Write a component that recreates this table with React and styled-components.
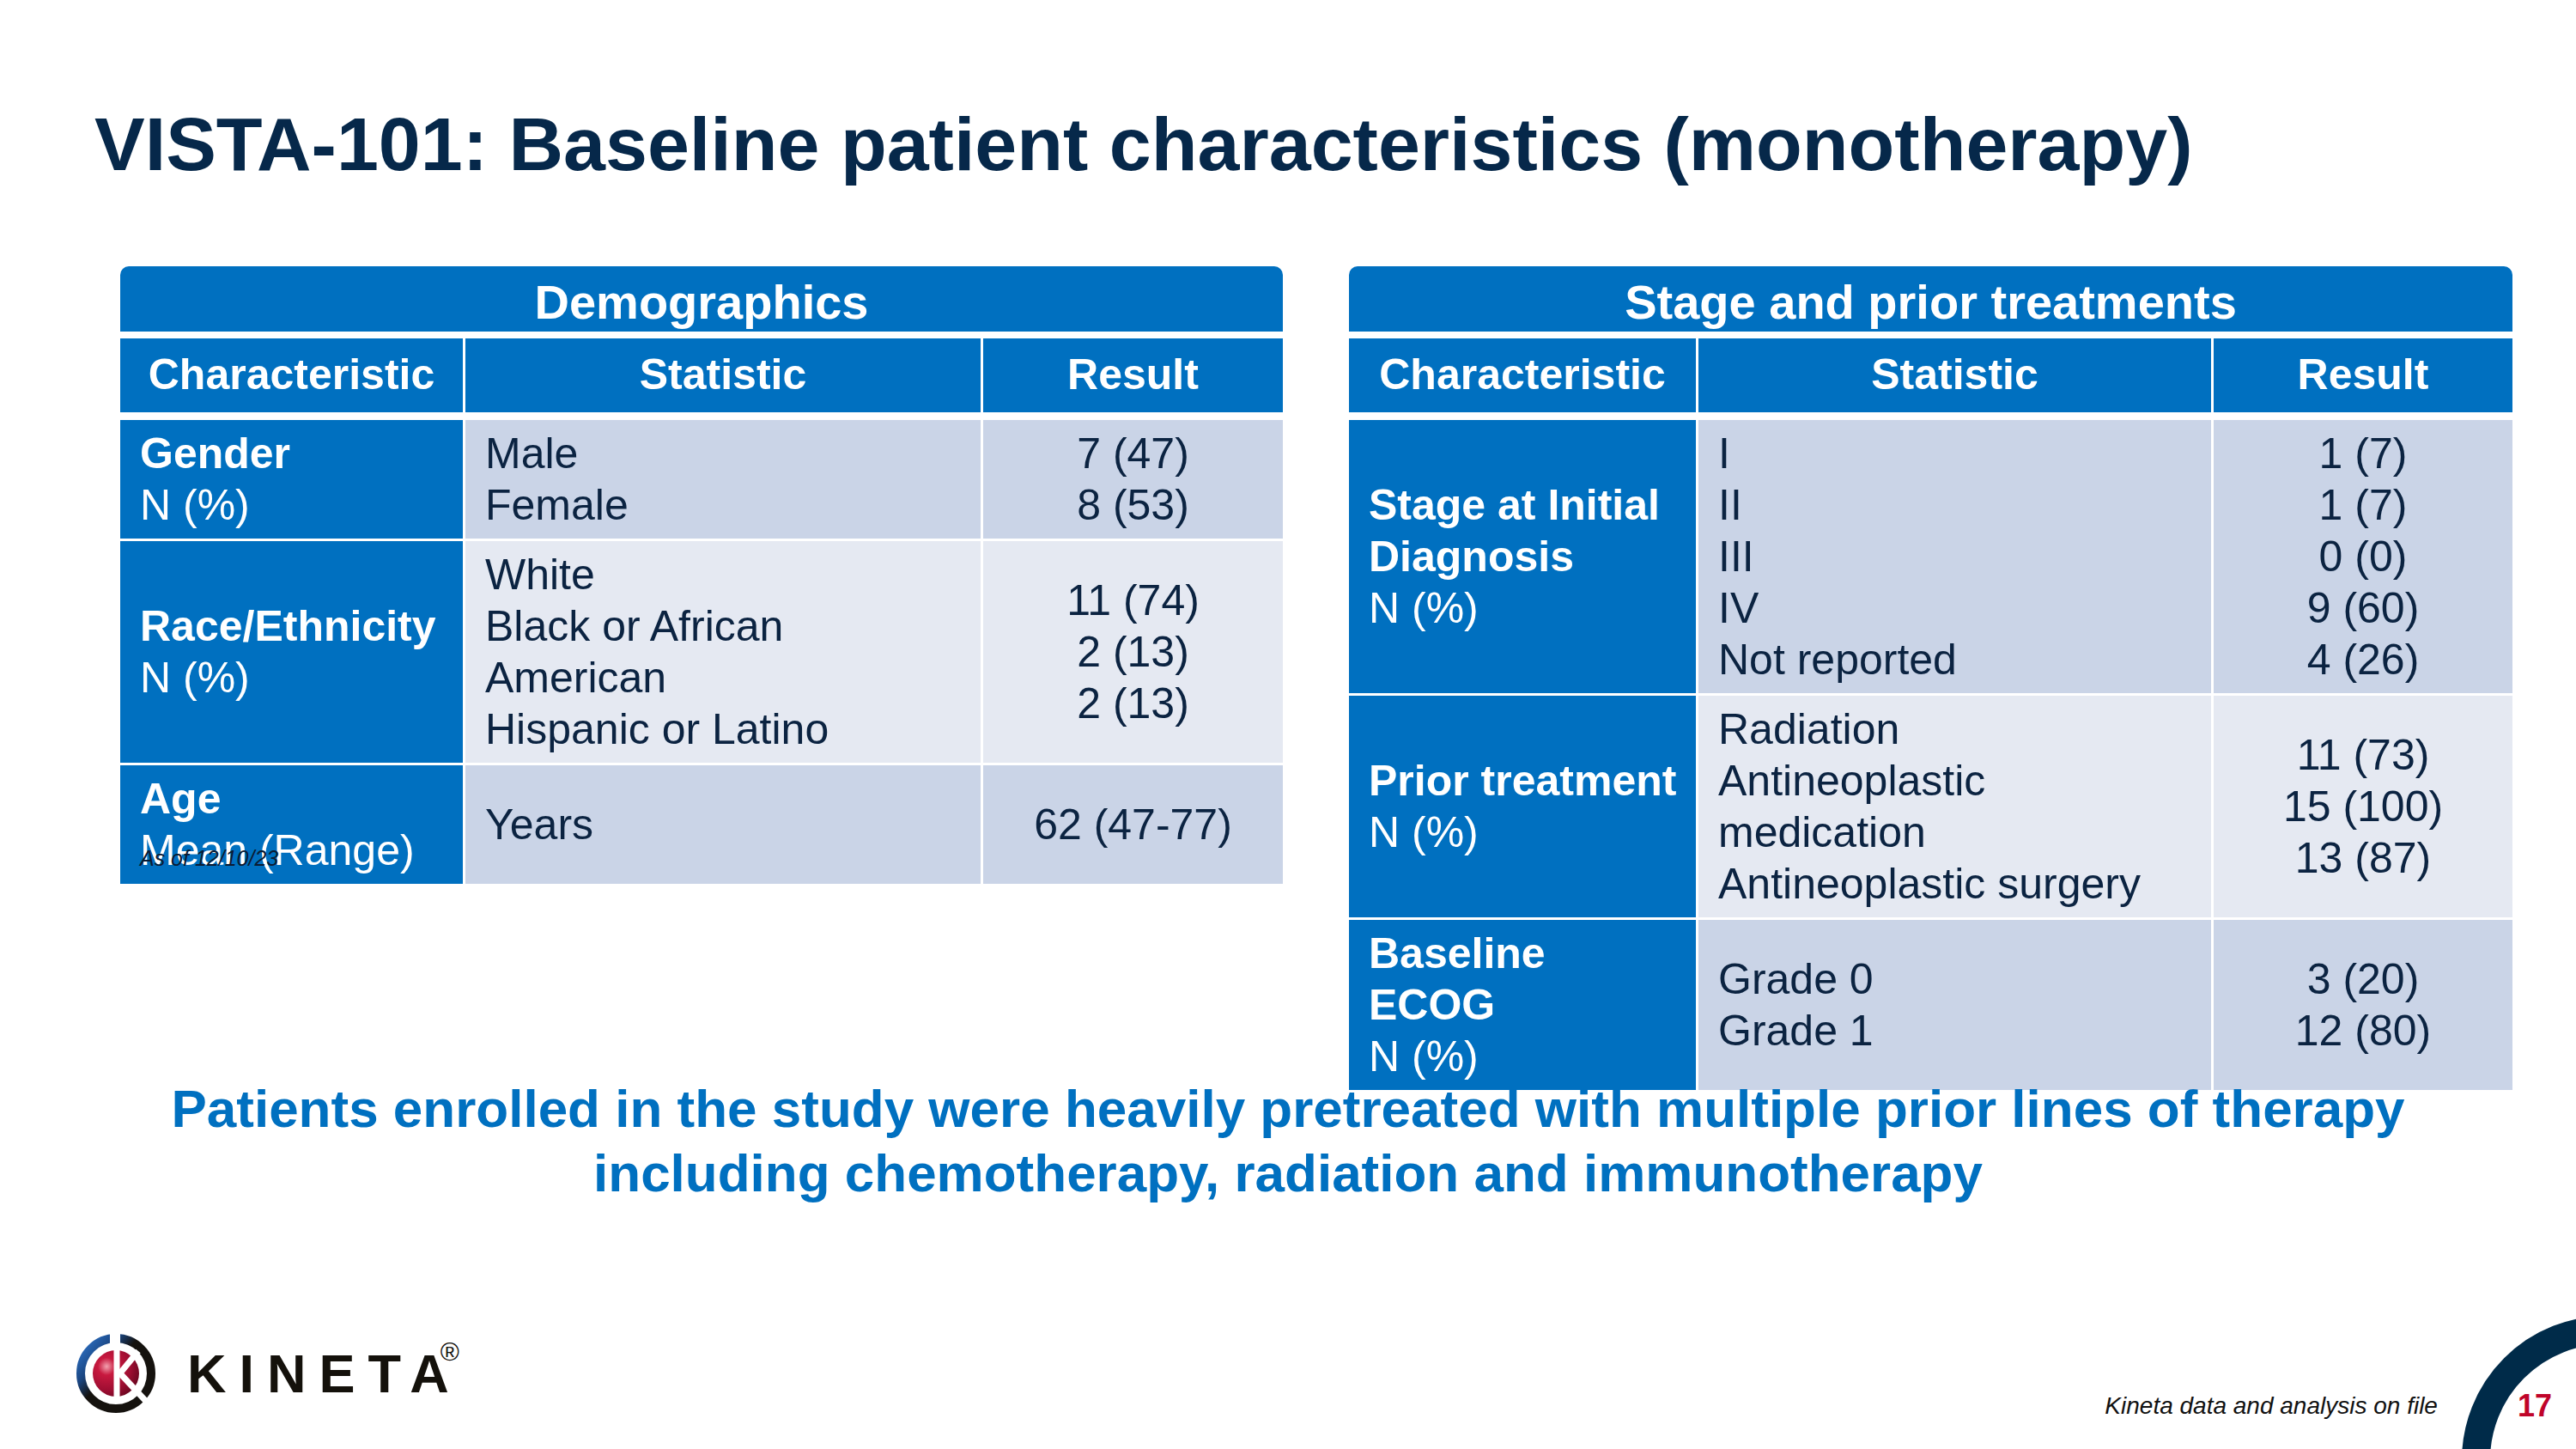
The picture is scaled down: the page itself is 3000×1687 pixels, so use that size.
import styled, { createGlobalStyle } from "styled-components";

const GlobalStyle = createGlobalStyle`
  html, body {
    margin: 0;
    padding: 0;
    background: #fff;
  }
  body {
    font-family: "Liberation Sans", Arial, sans-serif;
  }
`;

const BLUE = "#0070c0";
const NAVY = "#06284a";
const INK = "#0b2341";

const Slide = styled.div`
  position: relative;
  width: 3000px;
  height: 1687px;
  box-sizing: border-box;
  padding-top: 124px;
  overflow: hidden;
  background: #fff;
  display: flex;
  flex-direction: column;
`;

const Title = styled.h1`
  margin: 0 0 0 110px;
  font-size: 88px;
  line-height: 88px;
  font-weight: bold;
  color: ${NAVY};
`;

const Tables = styled.div`
  display: flex;
  align-items: flex-start;
  gap: 77px;
  margin-top: 98px;
  padding-left: 140px;
`;

const Table = styled.div`
  display: grid;
  grid-template-columns: ${(p) => p.$cols};
  column-gap: 3px;
  row-gap: 3px;
`;

const Band = styled.div`
  grid-column: 1 / -1;
  height: 76px;
  box-sizing: border-box;
  padding-top: 9px;
  margin-bottom: 5px;
  border-radius: 10px 10px 0 0;
  background: ${BLUE};
  color: #fff;
  font-size: 56px;
  line-height: 66px;
  font-weight: bold;
  text-align: center;
`;

const HeadCell = styled.div`
  padding: 12px 0 14px;
  margin-bottom: 6px;
  background: ${BLUE};
  color: #fff;
  font-size: 50px;
  line-height: 60px;
  font-weight: bold;
  text-align: center;
`;

const Cell = styled.div`
  display: flex;
  flex-direction: column;
  justify-content: center;
  align-items: ${(p) => (p.$center ? "center" : "flex-start")};
  padding: 9px 23px;
  font-size: 50px;
  line-height: 60px;
  white-space: nowrap;
`;

const LabelCell = styled(Cell)`
  background: ${BLUE};
  color: #fff;
`;

const DataCell = styled(Cell)`
  background: ${(p) => (p.$shade === "dark" ? "#cad4e7" : "#e5e9f2")};
  color: ${INK};
`;

const Line = styled.div`
  font-weight: ${(p) => (p.$bold ? "bold" : "normal")};
`;

const DateNote = styled.div`
  position: absolute;
  left: 163px;
  top: 987px;
  font-size: 25px;
  line-height: 25px;
  font-style: italic;
  color: #0b1b33;
`;

const Summary = styled.p`
  position: relative;
  margin: -16px 0 0;
  text-align: center;
  color: ${BLUE};
  font-size: 62px;
  line-height: 75px;
  font-weight: bold;
`;

const Footer = styled.div`
  position: relative;
  margin-top: auto;
  height: 136px;
  display: flex;
  align-items: flex-start;
  padding: 0 28px 0 87px;
`;

const Wordmark = styled.div`
  display: flex;
  align-items: flex-start;
  margin: 17px 0 0 35px;
  font-size: 63px;
  line-height: 63px;
  font-weight: bold;
  letter-spacing: 15px;
  color: #14110b;
`;

const Reg = styled.span`
  margin: -9px 0 0 -25px;
  font-size: 30px;
  line-height: 30px;
  font-weight: normal;
  letter-spacing: 0;
`;

const Source = styled.div`
  margin: 72px 93px 0 auto;
  font-size: 28px;
  line-height: 28px;
  font-style: italic;
  color: #111;
`;

const PageNum = styled.div`
  margin-top: 68px;
  font-size: 36px;
  line-height: 36px;
  font-weight: bold;
  color: #c0042a;
`;

const CornerArc = styled.svg`
  position: absolute;
  left: 2860px;
  top: 1525px;
`;

const demographics = [
  {
    label: ["Gender"],
    sub: "N (%)",
    stats: ["Male", "Female"],
    results: ["7 (47)", "8 (53)"],
    shade: "dark",
  },
  {
    label: ["Race/Ethnicity"],
    sub: "N (%)",
    stats: ["White", "Black or African", "American", "Hispanic or Latino"],
    results: ["11 (74)", "2 (13)", "2 (13)"],
    shade: "light",
  },
  {
    label: ["Age"],
    sub: "Mean (Range)",
    stats: ["Years"],
    results: ["62 (47-77)"],
    shade: "dark",
  },
];

const treatments = [
  {
    label: ["Stage at Initial", "Diagnosis"],
    sub: "N (%)",
    stats: ["I", "II", "III", "IV", "Not reported"],
    results: ["1 (7)", "1 (7)", "0 (0)", "9 (60)", "4 (26)"],
    shade: "dark",
  },
  {
    label: ["Prior treatment"],
    sub: "N (%)",
    stats: ["Radiation", "Antineoplastic", "medication", "Antineoplastic surgery"],
    results: ["11 (73)", "15 (100)", "13 (87)"],
    shade: "light",
  },
  {
    label: ["Baseline", "ECOG"],
    sub: "N (%)",
    stats: ["Grade 0", "Grade 1"],
    results: ["3 (20)", "12 (80)"],
    shade: "dark",
  },
];

function DataTable({ title, cols, rows }) {
  return (
    <Table $cols={cols}>
      <Band>{title}</Band>
      <HeadCell>Characteristic</HeadCell>
      <HeadCell>Statistic</HeadCell>
      <HeadCell>Result</HeadCell>
      {rows.flatMap((row, i) => [
        <LabelCell key={`l${i}`}>
          {row.label.map((t) => (
            <Line key={t} $bold>
              {t}
            </Line>
          ))}
          <Line>{row.sub}</Line>
        </LabelCell>,
        <DataCell key={`s${i}`} $shade={row.shade}>
          {row.stats.map((t) => (
            <Line key={t}>{t}</Line>
          ))}
        </DataCell>,
        <DataCell key={`r${i}`} $shade={row.shade} $center>
          {row.results.map((t, j) => (
            <Line key={j}>{t}</Line>
          ))}
        </DataCell>,
      ])}
    </Table>
  );
}

function KinetaMark() {
  return (
    <svg width="96" height="96" viewBox="0 0 96 96">
      <defs>
        <linearGradient id="ring" x1="0" y1="0.1" x2="0.7" y2="0.7">
          <stop offset="0" stopColor="#2c6fc2" />
          <stop offset="0.35" stopColor="#1a4580" />
          <stop offset="0.6" stopColor="#15120e" />
          <stop offset="1" stopColor="#15120e" />
        </linearGradient>
        <radialGradient id="ball" cx="0.3" cy="0.35" r="0.75">
          <stop offset="0" stopColor="#f2a0ae" />
          <stop offset="0.25" stopColor="#c8193f" />
          <stop offset="0.7" stopColor="#9c0d31" />
          <stop offset="1" stopColor="#6a0620" />
        </radialGradient>
      </defs>
      <circle cx="48" cy="48" r="41" fill="none" stroke="url(#ring)" strokeWidth="10" />
      <circle cx="48" cy="48" r="27" fill="url(#ball)" />
      <rect x="41" y="0" width="12" height="14" fill="#fff" />
      <rect x="45.5" y="14" width="7" height="64" fill="#fff" />
      <line x1="51" y1="50" x2="74" y2="22" stroke="#fff" strokeWidth="7" />
      <line x1="51" y1="46" x2="92" y2="90" stroke="#fff" strokeWidth="7" />
    </svg>
  );
}

export default function App() {
  return (
    <>
      <GlobalStyle />
      <Slide>
        <Title>VISTA-101: Baseline patient characteristics (monotherapy)</Title>
        <Tables>
          <DataTable title="Demographics" cols="399px 600px 349px" rows={demographics} />
          <DataTable
            title="Stage and prior treatments"
            cols="404px 597px 348px"
            rows={treatments}
          />
        </Tables>
        <DateNote>As of 12/10/23</DateNote>
        <Summary>
          Patients enrolled in the study were heavily pretreated with multiple prior lines of therapy
          <br />
          including chemotherapy, radiation and immunotherapy
        </Summary>
        <CornerArc width="140" height="162" viewBox="0 0 140 162">
          <circle cx="175" cy="175" r="151.5" fill="none" stroke="#002b49" strokeWidth="33" />
        </CornerArc>
        <Footer>
          <KinetaMark />
          <Wordmark>
            KINETA<Reg>®</Reg>
          </Wordmark>
          <Source>Kineta data and analysis on file</Source>
          <PageNum>17</PageNum>
        </Footer>
      </Slide>
    </>
  );
}
